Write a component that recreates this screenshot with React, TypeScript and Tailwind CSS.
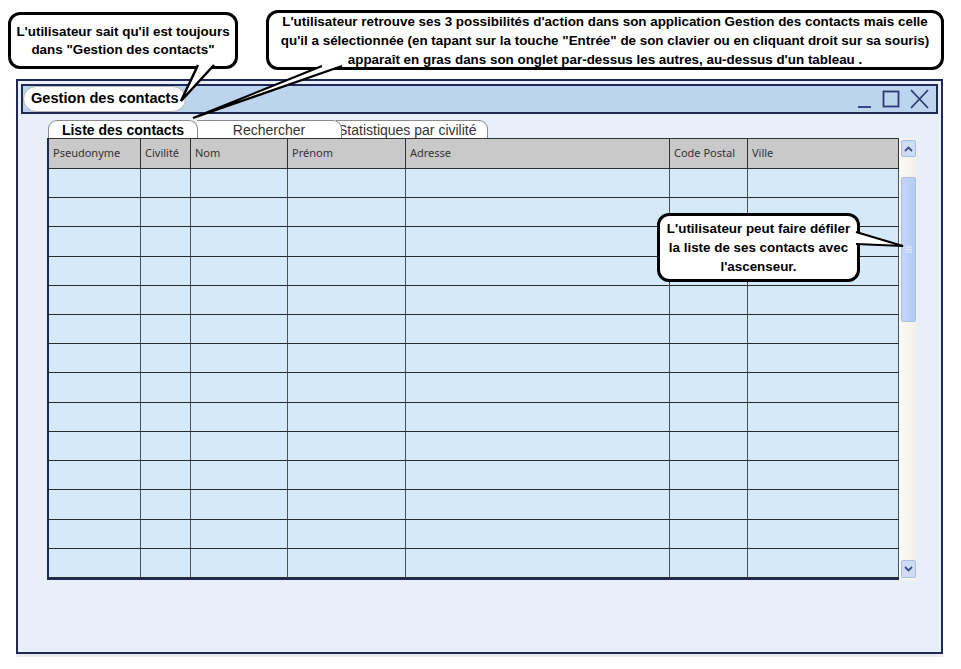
const columns = [
  { label: "Pseudonyme" },
  { label: "Civilité" },
  { label: "Nom" },
  { label: "Prénom" },
  { label: "Adresse" },
  { label: "Code Postal" },
  { label: "Ville" },
];

const rowCount = 14;

function Callout({
  className,
  lines,
}: {
  className: string;
  lines: string[];
}) {
  return (
    <div
      className={`flex flex-col items-center justify-center rounded-[12px] border-[3px] border-black bg-white text-center text-[13.4px] font-bold text-black ${className}`}
    >
      {lines.map((l) => (
        <span key={l} className="whitespace-nowrap">
          {l}
        </span>
      ))}
    </div>
  );
}

function ScrollBar() {
  return (
    <div className="flex h-[442px] w-[18px] flex-col items-center bg-gradient-to-r from-[#fbfaf7] to-[#f1efe9] pt-[2px] pb-[2px]">
      {/* flèche haut */}
      <div className="flex h-[17px] w-[15px] items-center justify-center rounded-[2px] border border-[#a9bde4] bg-[#cfdcf6]">
        <svg width="9" height="6" viewBox="0 0 9 6">
          <path d="M1 5 L4.5 1.5 L8 5" fill="none" stroke="#3b4e86" strokeWidth="1.8" />
        </svg>
      </div>
      <div className="h-[20px]" />
      {/* curseur */}
      <div className="flex h-[145px] w-[15px] items-center justify-center rounded-[2px] border border-[#a8bde8] bg-gradient-to-r from-[#c3d5f8] to-[#b6cbf4]">
        <svg width="7" height="7" viewBox="0 0 7 7">
          <path d="M0 1 H7 M0 3.5 H7 M0 6 H7" stroke="#e8effc" strokeWidth="1" />
        </svg>
      </div>
      <div className="flex-1" />
      {/* flèche bas */}
      <div className="flex h-[18px] w-[15px] items-center justify-center rounded-[2px] border border-[#a9bde4] bg-[#cfdcf6]">
        <svg width="9" height="6" viewBox="0 0 9 6">
          <path d="M1 1 L4.5 4.5 L8 1" fill="none" stroke="#3b4e86" strokeWidth="1.8" />
        </svg>
      </div>
    </div>
  );
}

export default function App() {
  return (
    <div className="relative h-[669px] w-[961px] overflow-hidden bg-white font-['Liberation_Sans',Arial,sans-serif]">
      {/* bulles du haut */}
      <div className="flex h-[79px] items-start">
        <Callout
          className="ml-[8px] mt-[12px] h-[57px] w-[230px] leading-[18px]"
          lines={[
            "L'utilisateur sait qu'il est toujours",
            'dans "Gestion des contacts"',
          ]}
        />
        <Callout
          className="ml-[28px] mt-[10px] h-[60px] w-[678px] leading-[19px]"
          lines={[
            "L'utilisateur retrouve ses 3 possibilités d'action dans son application Gestion des contacts mais celle",
            "qu'il a sélectionnée (en tapant sur la touche \"Entrée\" de son clavier ou en cliquant droit sur sa souris)",
            "apparaît en gras dans son onglet par-dessus les autres, au-dessus d'un tableau .",
          ]}
        />
      </div>

      {/* fenêtre */}
      <div className="ml-[16px] h-[575px] w-[927px] border-2 border-[#1e2a55] bg-[#e8eff9] p-[3px] shadow-[0_3px_0_0_#ececec]">
        {/* barre de titre */}
        <div className="flex h-[30px] items-center justify-between border-2 border-[#1e2a55] bg-[#bdd4ee]">
          <div className="flex h-[26px] w-[163px] items-center rounded-[13px] border border-[#b5b5b5] bg-white pl-[7px] text-[14.6px] font-bold text-black">
            Gestion des contacts
          </div>
          <svg width="74" height="26" viewBox="0 0 74 26" className="mr-[6px]">
            <path d="M2 21 H15" stroke="#2b3a70" strokeWidth="1.8" />
            <rect x="27.5" y="5.5" width="15" height="15" fill="none" stroke="#2b3a70" strokeWidth="1.8" />
            <path d="M55 4 L72 22 M72 4 L55 22" stroke="#2b3a70" strokeWidth="1.8" />
          </svg>
        </div>

        {/* onglets */}
        <div className="ml-[27px] mt-[6px] flex h-[18px] items-end text-[14px] leading-none">
          <div className="relative z-20 flex h-[18px] w-[150px] items-center justify-center rounded-t-[9px] border-x border-t border-[#8a8a8a] bg-white font-bold text-black">
            Liste des contacts
          </div>
          <div className="relative z-10 -ml-[1px] flex h-[18px] w-[145px] items-center justify-center rounded-tr-[9px] border-r border-t border-[#8a8a8a] bg-white text-[#333]">
            Rechercher
          </div>
          <div className="-ml-[6px] flex h-[18px] w-[152px] items-center overflow-hidden rounded-tr-[9px] border-r border-t border-[#8a8a8a] bg-white pl-[2px] text-[#333]">
            Statistiques par civilité
          </div>
        </div>

        {/* tableau + ascenseur */}
        <div className="ml-[26px] flex">
          <div className="grid h-[442px] w-[852px] grid-cols-[92px_50px_97px_118px_264px_78px_151px] grid-rows-[30px_repeat(14,minmax(0,1fr))] border-t border-b-2 border-l-2 border-t-[#333] border-b-[#1e2a55] border-l-[#1e2a55] font-['Noto_Sans',sans-serif]">
            {columns.map((c) => (
              <div
                key={c.label}
                className="flex items-center border-r border-b border-[#2f2f2f] bg-[#c9c9c9] pl-[4px] text-[11px] text-[#333]"
              >
                {c.label}
              </div>
            ))}
            {Array.from({ length: rowCount }).flatMap((_, r) =>
              columns.map((c) => (
                <div
                  key={`${r}-${c.label}`}
                  className="border-r border-b border-r-[#4b5259] border-b-[#2a2a2a] bg-[#d4eaf8]"
                />
              ))
            )}
          </div>
          <ScrollBar />
        </div>
      </div>

      {/* bulle de l'ascenseur */}
      <Callout
        className="absolute left-[657px] top-[213px] z-10 h-[69px] w-[203px] leading-[19px]"
        lines={[
          "L'utilisateur peut faire défiler",
          "la liste de ses contacts avec",
          "l'ascenseur.",
        ]}
      />

      {/* pointes des bulles */}
      <svg
        className="pointer-events-none absolute left-0 top-0 z-30"
        width="961"
        height="669"
        viewBox="0 0 961 669"
      >
        <path d="M198 65 L181 101 L214 65" fill="white" stroke="black" strokeWidth="2.5" strokeLinejoin="miter" />
        <path d="M322 66 L193 118 L342 66" fill="white" stroke="black" strokeWidth="2.2" />
        <path d="M856 232 L903 246 L856 244" fill="white" stroke="black" strokeWidth="2.2" />
      </svg>
    </div>
  );
}
